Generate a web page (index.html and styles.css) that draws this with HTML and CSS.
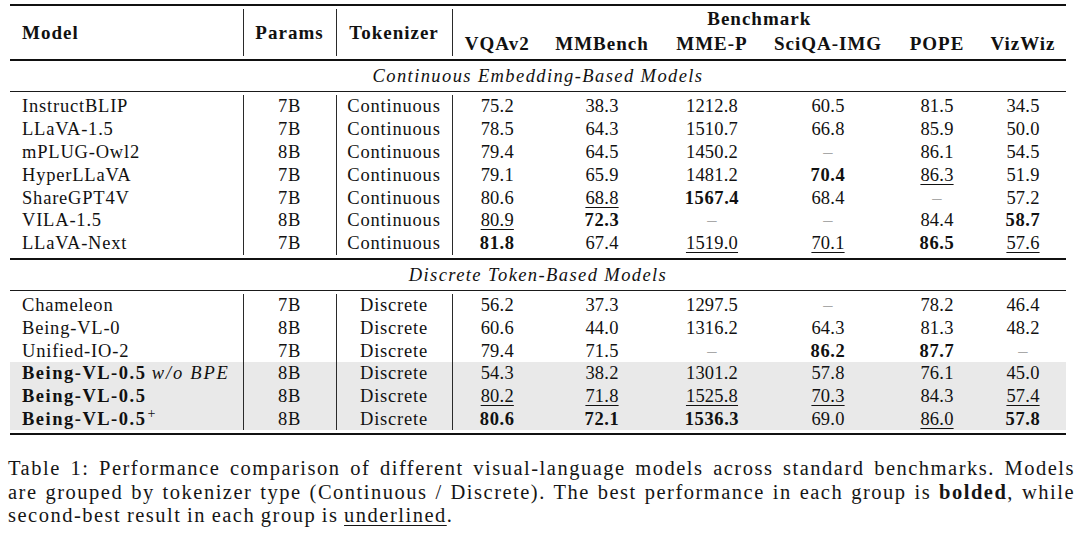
FILE: index.html
```html
<!DOCTYPE html>
<html lang="en">
<head>
<meta charset="utf-8">
<title>Table 1</title>
<link rel="stylesheet" href="styles.css">
</head>
<body>
<div class="page">
  <table class="results">
    <colgroup>
      <col class="c-model"><col class="c-params"><col class="c-tok">
      <col class="c-vqa"><col class="c-mmb"><col class="c-mme"><col class="c-sci"><col class="c-pope"><col class="c-viz">
    </colgroup>
    <thead>
      <tr class="rule-row"><td colspan="9" class="rule-cell gap-below"><div class="line heavy"></div></td></tr>
      <tr class="head1">
        <th rowspan="2" class="model vl">Model</th>
        <th rowspan="2" class="vl">Params</th>
        <th rowspan="2" class="vl">Tokenizer</th>
        <th colspan="6" class="bench">Benchmark</th>
      </tr>
      <tr class="head2">
        <th>VQAv2</th><th>MMBench</th><th>MME-P</th><th>SciQA-IMG</th><th>POPE</th><th>VizWiz</th>
      </tr>
      <tr class="rule-row"><td colspan="9" class="rule-cell gap-above"><div class="line heavy"></div></td></tr>
    </thead>
    <tbody>
      <tr class="group"><td colspan="9">Continuous Embedding-Based Models</td></tr>
      <tr class="rule-row"><td colspan="9" class="rule-cell gap-below"><div class="line"></div></td></tr>
      <tr class="row"><td class="model vl">InstructBLIP</td><td class="vl">7B</td><td class="vl">Continuous</td><td class="num">75.2</td><td class="num">38.3</td><td class="num">1212.8</td><td class="num">60.5</td><td class="num">81.5</td><td class="num">34.5</td></tr>
      <tr class="row"><td class="model vl">LLaVA-1.5</td><td class="vl">7B</td><td class="vl">Continuous</td><td class="num">78.5</td><td class="num">64.3</td><td class="num">1510.7</td><td class="num">66.8</td><td class="num">85.9</td><td class="num">50.0</td></tr>
      <tr class="row"><td class="model vl">mPLUG-Owl2</td><td class="vl">8B</td><td class="vl">Continuous</td><td class="num">79.4</td><td class="num">64.5</td><td class="num">1450.2</td><td class="num na">–</td><td class="num">86.1</td><td class="num">54.5</td></tr>
      <tr class="row"><td class="model vl">HyperLLaVA</td><td class="vl">7B</td><td class="vl">Continuous</td><td class="num">79.1</td><td class="num">65.9</td><td class="num">1481.2</td><td class="num best">70.4</td><td class="num"><span class="second">86.3</span></td><td class="num">51.9</td></tr>
      <tr class="row"><td class="model vl">ShareGPT4V</td><td class="vl">7B</td><td class="vl">Continuous</td><td class="num">80.6</td><td class="num"><span class="second">68.8</span></td><td class="num best">1567.4</td><td class="num">68.4</td><td class="num na">–</td><td class="num">57.2</td></tr>
      <tr class="row"><td class="model vl">VILA-1.5</td><td class="vl">8B</td><td class="vl">Continuous</td><td class="num"><span class="second">80.9</span></td><td class="num best">72.3</td><td class="num na">–</td><td class="num na">–</td><td class="num">84.4</td><td class="num best">58.7</td></tr>
      <tr class="row"><td class="model vl">LLaVA-Next</td><td class="vl">7B</td><td class="vl">Continuous</td><td class="num best">81.8</td><td class="num">67.4</td><td class="num"><span class="second">1519.0</span></td><td class="num"><span class="second">70.1</span></td><td class="num best">86.5</td><td class="num"><span class="second">57.6</span></td></tr>
      <tr class="rule-row"><td colspan="9" class="rule-cell gap-above"><div class="line heavy"></div></td></tr>
      <tr class="group"><td colspan="9">Discrete Token-Based Models</td></tr>
      <tr class="rule-row"><td colspan="9" class="rule-cell gap-below"><div class="line"></div></td></tr>
      <tr class="row"><td class="model vl">Chameleon</td><td class="vl">7B</td><td class="vl">Discrete</td><td class="num">56.2</td><td class="num">37.3</td><td class="num">1297.5</td><td class="num na">–</td><td class="num">78.2</td><td class="num">46.4</td></tr>
      <tr class="row"><td class="model vl">Being-VL-0</td><td class="vl">8B</td><td class="vl">Discrete</td><td class="num">60.6</td><td class="num">44.0</td><td class="num">1316.2</td><td class="num">64.3</td><td class="num">81.3</td><td class="num">48.2</td></tr>
      <tr class="row"><td class="model vl">Unified-IO-2</td><td class="vl">7B</td><td class="vl">Discrete</td><td class="num">79.4</td><td class="num">71.5</td><td class="num na">–</td><td class="num best">86.2</td><td class="num best">87.7</td><td class="num na">–</td></tr>
      <tr class="row ours"><td class="model vl"><b>Being-VL-0.5</b> <i>w/o BPE</i></td><td class="vl">8B</td><td class="vl">Discrete</td><td class="num">54.3</td><td class="num">38.2</td><td class="num">1301.2</td><td class="num">57.8</td><td class="num">76.1</td><td class="num">45.0</td></tr>
      <tr class="row ours"><td class="model vl"><b>Being-VL-0.5</b></td><td class="vl">8B</td><td class="vl">Discrete</td><td class="num"><span class="second">80.2</span></td><td class="num"><span class="second">71.8</span></td><td class="num"><span class="second">1525.8</span></td><td class="num"><span class="second">70.3</span></td><td class="num">84.3</td><td class="num"><span class="second">57.4</span></td></tr>
      <tr class="row ours"><td class="model vl"><b>Being-VL-0.5<sup>+</sup></b></td><td class="vl">8B</td><td class="vl">Discrete</td><td class="num best">80.6</td><td class="num best">72.1</td><td class="num best">1536.3</td><td class="num">69.0</td><td class="num"><span class="second">86.0</span></td><td class="num best">57.8</td></tr>
      <tr class="rule-row"><td colspan="9" class="rule-cell gap-above"><div class="line heavy"></div></td></tr>
    </tbody>
  </table>

  <p class="caption">
    <span class="cap-line">Table 1: Performance comparison of different visual-language models across standard benchmarks. Models</span>
    <span class="cap-line">are grouped by tokenizer type (Continuous / Discrete). The best performance in each group is <b>bolded</b>, while</span>
    <span class="cap-line last">second-best result in each group is <u>underlined</u>.</span>
  </p>
</div>
</body>
</html>
```

FILE: styles.css
```css
* { box-sizing: border-box; }

html, body {
  margin: 0;
  padding: 0;
  background: #ffffff;
}

body {
  font-family: "Liberation Serif", "Times New Roman", serif;
  color: #111111;
}

.page {
  width: 1080px;
  height: 540px;
  padding: 4px 5px 0 8px;
  overflow: hidden;
}

/* ---------- table ---------- */
.results {
  margin-left: 2px;
  width: 1056px;
  table-layout: fixed;
  border-collapse: collapse;
  border-spacing: 0;
  font-size: 18.5px;
}

.c-model { width: 233px; }
.c-params { width: 93px; }
.c-tok { width: 116px; }
.c-vqa { width: 90px; }
.c-mmb { width: 120px; }
.c-mme { width: 100px; }
.c-sci { width: 132px; }
.c-pope { width: 86px; }
.c-viz { width: 86px; }

.results th,
.results td {
  padding: 0;
  text-align: center;
  vertical-align: middle;
  white-space: nowrap;
}

.results th {
  font-weight: bold;
  font-size: 19px;
  letter-spacing: 1px;
}

.results .model {
  text-align: left;
  padding-left: 12px;
}

.vl { border-right: 1px solid #2a2a2a; }

.head1 { height: 20px; }
.head1 th { line-height: 20px; }
.head2 { height: 25px; }
.head2 th { line-height: 25px; padding-top: 2px; }
.bench { padding-top: 1px; }

/* booktabs-like rules */
.rule-cell { padding: 0; line-height: 0; font-size: 0; }
.rule-cell.gap-below { padding-bottom: 3px; }
.rule-cell.gap-above { padding-top: 3px; }
.line { height: 1px; background: #1a1a1a; }
.line.heavy { height: 2px; background: #111111; }

.group td {
  height: 30px;
  padding-top: 1px;
  font-style: italic;
  letter-spacing: 1.4px;
}

.row { height: 22.8px; }
.row td { line-height: 20px; letter-spacing: 0.8px; }
.row td.num { letter-spacing: 0.2px; }

.row.ours td { background: #e9e9e9; }

.best { font-weight: bold; letter-spacing: 0.6px !important; }
.second {
  text-decoration: underline;
  text-decoration-thickness: 1px;
  text-underline-offset: 3px;
}
.na { color: #a8a8a8; }

.model b { letter-spacing: 1.5px; }
.model i { letter-spacing: 1.8px; }
.model sup {
  font-size: 14px;
  font-weight: normal;
  line-height: 0;
  vertical-align: 7px;
  letter-spacing: 0;
  margin-left: 1px;
}

/* ---------- caption ---------- */
.caption {
  width: 1067px;
  margin: 22px 0 0 0;
  font-size: 20.5px;
  line-height: 23.5px;
  letter-spacing: 1.5px;
  word-spacing: -1px;
  color: #151515;
}

.cap-line {
  display: block;
  text-align: justify;
  text-align-last: justify;
}

.cap-line.last { text-align-last: left; }

.caption u {
  text-decoration-thickness: 1px;
  text-underline-offset: 3px;
}
```
